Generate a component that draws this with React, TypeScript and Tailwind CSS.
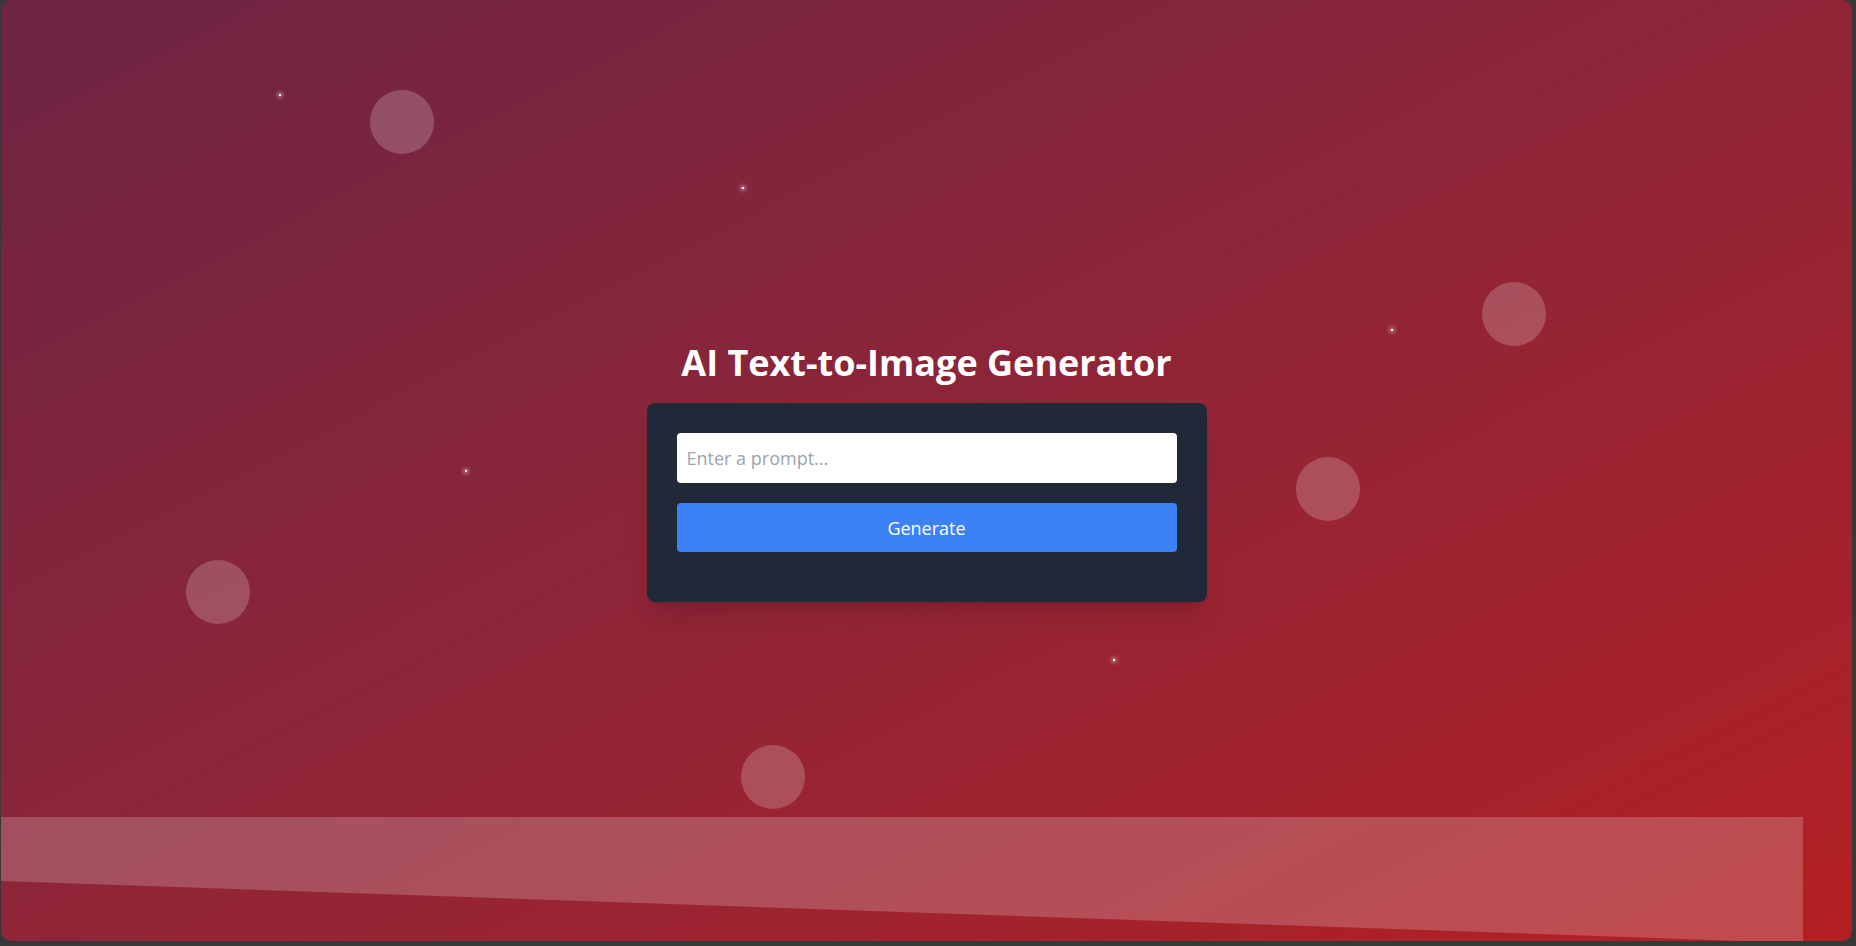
import React from "react";

const bubbles = [
  { left: 369, top: 90 },
  { left: 1481, top: 282 },
  { left: 1295, top: 457 },
  { left: 185, top: 560 },
  { left: 740, top: 745 },
];

const stars = [
  { left: 278, top: 94 },
  { left: 741, top: 187 },
  { left: 1390, top: 329 },
  { left: 464, top: 470 },
  { left: 1112, top: 659 },
];

export default function App() {
  return (
    <div className="h-screen w-full bg-[#383838] pl-px pr-1 pb-[5px] font-['Open_Sans',sans-serif]">
      <div className="relative flex h-full w-full flex-col items-center justify-center overflow-hidden rounded-[10px] bg-linear-to-br from-[#6d2443] to-[#b31f21]">
        {/* floating bubbles */}
        {bubbles.map((b, i) => (
          <div
            key={i}
            className="absolute h-16 w-16 rounded-full bg-white/20"
            style={{ left: b.left, top: b.top }}
          />
        ))}
        {stars.map((s, i) => (
          <div
            key={i}
            className="absolute h-[2px] w-[2px] bg-white shadow-[0_0_4px_1px_rgba(255,255,255,0.7)]"
            style={{ left: s.left, top: s.top }}
          />
        ))}

        {/* bottom wave */}
        <svg className="absolute left-0 top-[817px]" width="1802" height="124" viewBox="0 0 1802 124">
          <polygon points="0,0 1802,0 1802,124 1740,124 0,64" fill="rgba(255,255,255,0.2)" />
        </svg>

        <h1 className="relative mb-5 mt-1 text-4xl leading-10 font-bold text-white">AI Text-to-Image Generator</h1>
        <div className="relative w-[560px] rounded-lg bg-[#1f2937] p-[30px] shadow-xl">
          <input
            type="text"
            placeholder="Enter a prompt..."
            className="mb-5 block h-[50px] w-full rounded bg-white px-[10px] text-lg text-gray-900 outline-none placeholder:text-[#9ca3af]"
          />
          <button className="mb-5 block h-[49px] w-full rounded bg-[#3b82f6] text-lg text-white">
            Generate
          </button>
        </div>
      </div>
    </div>
  );
}
